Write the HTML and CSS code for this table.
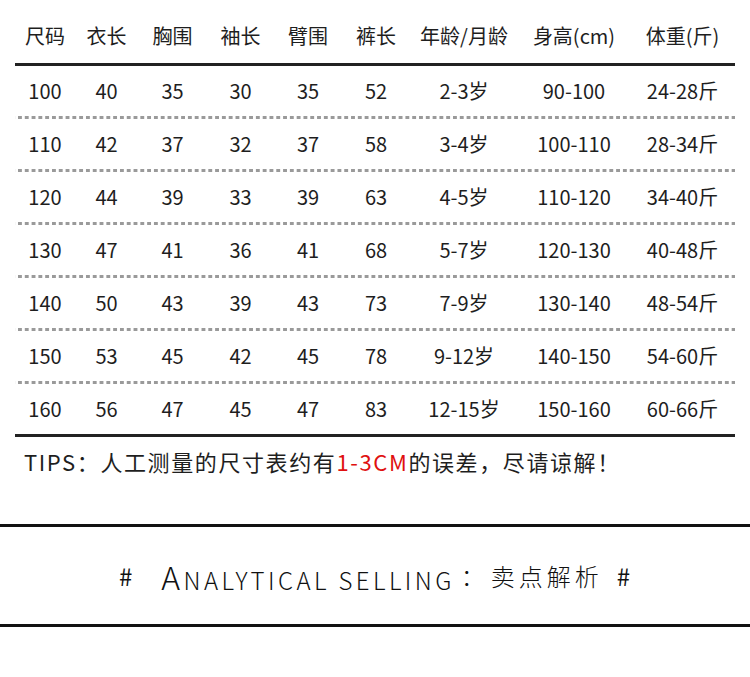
FILE: index.html
```html
<!DOCTYPE html>
<html lang="zh-CN">
<head>
<meta charset="utf-8">
<link rel="stylesheet" href="styles.css">
</head>
<body>
<div class="page">
  <div class="table">
    <div class="row head">
      <div>尺码</div><div>衣长</div><div>胸围</div><div>袖长</div><div>臂围</div><div>裤长</div><div>年龄/月龄</div><div>身高(cm)</div><div>体重(斤)</div>
    </div>
    <div class="row dot">
      <div>100</div><div>40</div><div>35</div><div>30</div><div>35</div><div>52</div><div>2-3岁</div><div>90-100</div><div>24-28斤</div>
    </div>
    <div class="row dot">
      <div>110</div><div>42</div><div>37</div><div>32</div><div>37</div><div>58</div><div>3-4岁</div><div>100-110</div><div>28-34斤</div>
    </div>
    <div class="row dot">
      <div>120</div><div>44</div><div>39</div><div>33</div><div>39</div><div>63</div><div>4-5岁</div><div>110-120</div><div>34-40斤</div>
    </div>
    <div class="row dot">
      <div>130</div><div>47</div><div>41</div><div>36</div><div>41</div><div>68</div><div>5-7岁</div><div>120-130</div><div>40-48斤</div>
    </div>
    <div class="row dot">
      <div>140</div><div>50</div><div>43</div><div>39</div><div>43</div><div>73</div><div>7-9岁</div><div>130-140</div><div>48-54斤</div>
    </div>
    <div class="row dot">
      <div>150</div><div>53</div><div>45</div><div>42</div><div>45</div><div>78</div><div>9-12岁</div><div>140-150</div><div>54-60斤</div>
    </div>
    <div class="row last">
      <div>160</div><div>56</div><div>47</div><div>45</div><div>47</div><div>83</div><div>12-15岁</div><div>150-160</div><div>60-66斤</div>
    </div>
  </div>
  <p class="tips">TIPS：人工测量的尺寸表约有<span class="red">1-3CM</span>的误差，尽请谅解！</p>
  <div class="section">
    <span class="hash">#</span>
    <span class="en"><span class="big">A</span>NALYTICAL SELLING</span>
    <span class="colon">：</span><span class="cn">卖点解析</span>
    <span class="hash2">#</span>
  </div>
</div>
</body>
</html>
```

FILE: styles.css
```css
html, body {
  margin: 0;
  padding: 0;
  background: #fff;
}
body {
  font-family: "Noto Sans CJK SC", "Noto Sans", sans-serif;
  color: #1e1e1e;
}
.page {
  width: 750px;
  height: 677px;
  overflow: hidden;
}
.table {
  margin: 9px 15px 0 15px;
  width: 720px;
}
.row {
  display: grid;
  grid-template-columns: 60px 63px 69px 67px 68px 68px 108px 112px 105px;
  align-items: center;
  justify-items: center;
  font-size: 20px;
  line-height: 1;
  height: 50px;
}
.row.head {
  height: 54px;
  border-bottom: 3px solid #222;
}
.row.dot {
  padding-bottom: 3px;
  background-image: linear-gradient(to right, #9a9a9a 52%, transparent 52%);
  background-size: 6.8px 3px;
  background-repeat: repeat-x;
  background-position: 3px 100%;
}
.row.last {
  border-bottom: 3px solid #222;
}
.tips {
  margin: 9px 0 0 24px;
  font-size: 22px;
  letter-spacing: 1.6px;
  line-height: 30px;
}
.red {
  color: #e01010;
}
.section {
  margin-top: 48px;
  border-top: 3px solid #111;
  border-bottom: 3px solid #111;
  height: 97px;
  display: flex;
  align-items: center;
  font-weight: 300;
  font-size: 24px;
  color: #111;
}
.hash {
  margin-left: 119px;
  font-size: 24px;
  font-weight: 400;
}
.en {
  margin-left: 29px;
  letter-spacing: 3.4px;
}
.big {
  font-size: 32px;
}
.colon {
  margin-left: 6px;
  width: 30px;
}
.cn {
  letter-spacing: 4px;
}
.hash2 {
  margin-left: 14px;
  font-size: 24px;
  font-weight: 400;
}
```
